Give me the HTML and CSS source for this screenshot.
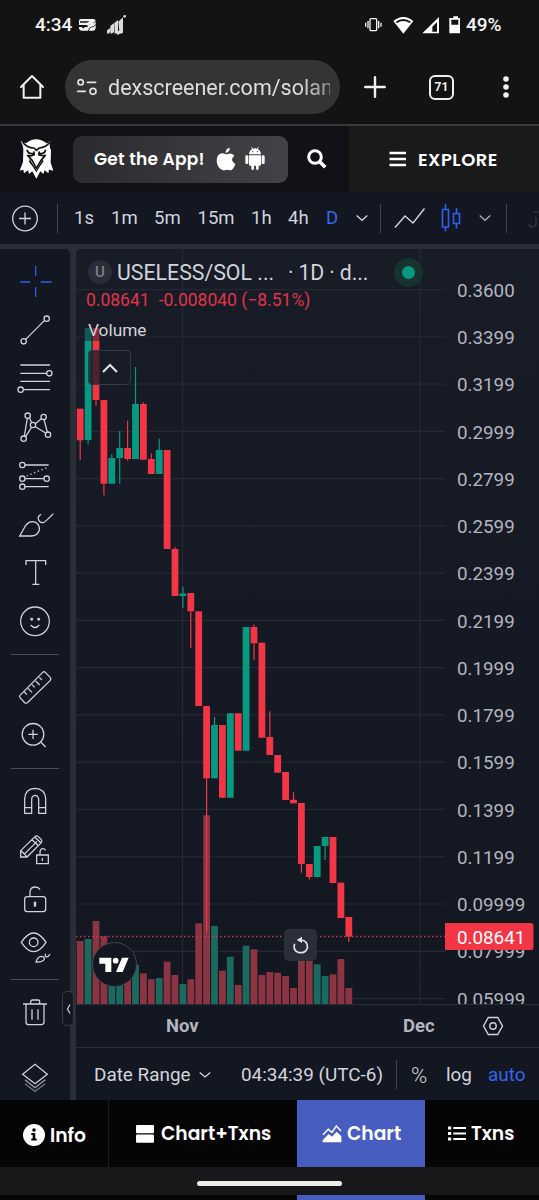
FILE: index.html
```
<!DOCTYPE html>
<html lang="en">
	<head>
		<meta charset="UTF-8">
		<meta name="viewport" content="width=device-width, initial-scale=1">
		<title>USELESS/SOL</title>
		<link rel="stylesheet" href="styles.css">
	</head>
	<body>

		<div class="status-bar">
			<span class="clock">4:34</span>
			<svg class="status-left" width="50" height="24" viewBox="0 0 150 72">
				<path fill="#f2f2f2" fill-rule="evenodd" d="M8 18h38q6 0 7 6l-12 9-7 1-6 8H3V24q0-6 5-6zM6 25v4h19q6 0 9-4zM3 36h22l4 2q8-6 12-6 6-1 12-6v18q-1 9-8 9H12q-9 0-9-9z"/>
				<circle cx="16" cy="42" r="4" fill="#131313"/>
				<path fill="none" stroke="#131313" stroke-width="2.5" d="M31 54q2-12 10-12 8 0 12-8"/>
				<g fill="#ddd"><path d="M87 52l10-7v13l-9 6zM97 39l11-9v28l-10 5zM109 30l11-9v34l-10 9zM114 60l13-11v12l-8 5zM121 26l14-13v46l-10 4z"/><circle cx="140" cy="10" r="4"/></g>
			</svg>
			<svg class="status-right" width="100" height="24" viewBox="0 0 300 72">
				<g fill="none" stroke="#f2f2f2" stroke-width="4"><rect x="21" y="17" width="20" height="36" rx="3"/><path d="M15 24v22M8 29v12M47 24v22M54 29v12"/></g>
				<path fill="#fff" d="M91 24q30-24 60 0l-30 38zM98 26l4 4q19-12 38 0l4-4q-23-16-46 0z" fill-rule="evenodd"/>
				<path fill="#fff" d="M178 61l50-49v49zM208 56h14V27l-14 14z" fill-rule="evenodd"/>
				<path fill="#fff" d="M265 15h6v-5h14v5h6v46h-32V15zM265 20v15h21V20z" fill-rule="evenodd"/>
			</svg>
			<span class="battery">49%</span>
		</div>

		<div class="browser-bar">
			<svg class="home" width="26" height="28" viewBox="0 0 78 84" fill="none" stroke="#f0f0f0" stroke-width="6" stroke-linejoin="round" stroke-linecap="round"><path d="M6 42L39 9l33 33M14 36v38h50V36"/></svg>
			<div class="url">
				<svg width="22" height="22" viewBox="0 0 66 66" fill="none" stroke="#e3e3e3" stroke-width="5" stroke-linecap="round"><circle cx="14" cy="19" r="8"/><path d="M34 19h25M5 46h23"/><circle cx="51" cy="46" r="9"/></svg>
				<span>dexscreener.com/solan</span>
			</div>
			<svg class="plus" width="22" height="22" viewBox="0 0 22 22" stroke="#f0f0f0" stroke-width="2.4" stroke-linecap="round"><path d="M11 1.2v19.6M1.2 11h19.6"/></svg>
			<div class="tab-count">71</div>
			<svg class="dots" width="8" height="24" viewBox="0 0 8 24" fill="#f0f0f0"><circle cx="4" cy="4" r="2.800"/><circle cx="4" cy="12" r="2.800"/><circle cx="4" cy="20" r="2.800"/></svg>
		</div>

		<header class="site-header">
			<svg class="owl" width="36" height="42" viewBox="0 0 108 126" fill="#fff">
				<path d="M24 16Q54-8 86 16L97 10Q92 24 99 36L98 74L106 98L93 95L91 106L80 97L76 108L67 100L55 122L43 100L33 108L30 97L18 106L16 95L5 98L15 72L16 36Q17 24 8 10z"/>
				<path fill="none" stroke="#111116" stroke-width="5" stroke-linejoin="round" d="M14 12Q26 30 48 30L55 37L64 30Q84 28 96 12M27 35Q31 50 46 46M83 35Q79 50 64 46M47 40L49 50Q33 56 29 52L43 68L55 91L69 67L82 52Q75 55 62 50L64 40"/>
				<path fill="#111116" d="M35 63l20 33 20-33 1 8q-9 11-21 32-12-21-22-32z"/>
			</svg>
			<div class="get-app">
				<span>Get the App!</span>
				<svg width="20" height="24" viewBox="0 0 60 72" fill="#fff"><path d="M41 2q2 12-12 16Q28 6 41 2zM29 22q5 0 9-2 9-3 17 6-15 11 3 26-7 18-15 18-5-1-11-2-8 3-10 2Q5 66 2 43 2 21 18 19q5 0 11 3z"/></svg>
				<svg width="20" height="24" viewBox="0 0 60 72" fill="#fff"><path d="M12 22Q13 10 22 6L18 1l2-1 4 5q7-2 12 0l4-5 2 1-4 5q9 4 10 16zM12 25h36v28q0 3-4 3h-3v11q-4 4-8 0V56h-6v11q-4 4-8 0V56h-3q-4 0-4-3z"/><rect x="1" y="25" width="9" height="26" rx="4"/><rect x="50" y="25" width="9" height="26" rx="4"/><circle cx="23" cy="14" r="2" fill="#444"/><circle cx="37" cy="14" r="2" fill="#444"/></svg>
			</div>
			<svg class="search" width="20" height="20" viewBox="0 0 20 20" fill="none" stroke="#fff" stroke-width="3"><circle cx="8" cy="8" r="6.3"/><path d="M12.5 12.5l5.7 5.7" stroke-width="3.6"/></svg>
			<div class="explore">
				<svg width="18" height="16" viewBox="0 0 18 16" stroke="#fff" stroke-width="2.6"><path d="M.5 2h16.5M.5 8h16.5M.5 14h16.5"/></svg>
				<span>EXPLORE</span>
			</div>
		</header>

		<div class="chart-toolbar">
			<svg width="27" height="27" viewBox="0 0 27 27" fill="none" stroke="#d1d4dc" stroke-width="1.3"><circle cx="13" cy="13.5" r="12.3"/><path d="M13 7.5v12M7 13.5h12"/></svg>
			<i class="sep"></i>
			<span>1s</span>
			<span>1m</span>
			<span>5m</span>
			<span>15m</span>
			<span>1h</span>
			<span>4h</span>
			<span class="active">D</span>
			<svg width="12" height="8" viewBox="0 0 12 8" fill="none" stroke="#d1d4dc" stroke-width="1.3"><path d="M.7 1.500L6 6.300l5.300-4.800"/></svg>
			<i class="sep"></i>
			<svg width="32" height="22" viewBox="0 0 32 22" fill="none" stroke="#d1d4dc" stroke-width="1.4"><path d="M1 20.500L11 9l8 7L30.500 1.500"/></svg>
			<svg width="22" height="28" viewBox="0 0 22 28" fill="none" stroke="#2f61ee" stroke-width="1.6"><path d="M2.500 5.500h6v17.500h-6zM5.500 0v5.500M5.500 23v4.500M13.500 9.500h6v10h-6zM16.500 4v5.500M16.500 19.500v5"/></svg>
			<svg width="12" height="8" viewBox="0 0 12 8" fill="none" stroke="#a9acb5" stroke-width="1.300"><path d="M.7 1.500L6 6.300l5.300-4.800"/></svg>
			<i class="sep"></i>
			<svg width="11" height="22" viewBox="0 0 11 22" fill="none" stroke="#2e323d" stroke-width="1.600"><path d="M5 5h6M8 10v6q0 4-4 4-2 0-3-3"/></svg>
		</div>

		<main class="workspace">
			<nav class="tools">
				<svg class="tool selected" viewBox="33 55 144 144"><path d="M107 79v30M107 142v30M61 127h30M122 127h33"/></svg>
				<svg class="tool" viewBox="33 200 144 144"><path d="M77 297l56-56"/><circle cx="71" cy="303" r="8"/><circle cx="140" cy="235" r="8"/></svg>
				<svg class="tool" viewBox="33 346 144 144"><path d="M61 376h89M61 401h79M61 425h89M71 450h79"/><circle cx="148" cy="401" r="8"/><circle cx="62" cy="450" r="8"/></svg>
				<svg class="tool" viewBox="33 491 144 144"><path d="M82 534l-9 53M88 532l7 15M77 589l17-27M106 550l18-15M106 559l31 19M132 538l10 37"/><circle cx="83" cy="526" r="8"/><circle cx="131" cy="530" r="8"/><circle cx="99" cy="554" r="8"/><circle cx="71" cy="595" r="8"/><circle cx="144" cy="583" r="8"/></svg>
				<svg class="tool" viewBox="33 637 144 144"><path d="M75 676h71M75 717h57M75 741h71"/><path stroke-dasharray="4 8" d="M80 709l60-25"/><circle cx="67" cy="676" r="8"/><circle cx="67" cy="717" r="8"/><circle cx="140" cy="717" r="8"/><circle cx="67" cy="741" r="8"/></svg>
				<svg class="tool" viewBox="33 2 144 144"><path d="M59 107L78 74Q91 60 107 66Q120 76 118 89Q113 107 93 107zM123 42q-12 8-7 17 4 9 14 8 5-1 30-27"/></svg>
				<svg class="tool" viewBox="33 148 144 144"><path d="M78 196v-13h59v13M107 183v71M97 254h21"/></svg>
				<svg class="tool" viewBox="33 293 144 144"><circle cx="105" cy="363" r="43"/><path d="M92 374q13 15 26 0"/><circle cx="95" cy="357" r="2.500"/><circle cx="116" cy="357" r="2.500"/></svg>
				<i class="line"></i>
				<svg class="tool" viewBox="33 488 144 144"><path d="M60 585l68-69q4-4 8 0l15 16q3 4 0 8l-69 67q-4 3-8 0l-14-15q-3-4 0-7zM73 575l8 8M84 564l12 12M96 553l8 8M107 542l12 12M118 531l8 8"/></svg>
				<svg class="tool" viewBox="33 634 144 144"><circle cx="99" cy="701" r="32.500"/><path d="M99 687v28M85 701h28M122 724l15 15"/></svg>
				<i class="line"></i>
				<svg class="tool" viewBox="33 22 144 144"><path d="M74 131V87Q76 57 105 56q30 1 32 31v44h-21V90q-1-13-11-13-10 1-10 13v41zM74 114h21M116 114h21"/></svg>
				<svg class="tool" viewBox="33 167 144 144"><path d="M62 260v-19l43-42q5-5 10 0l9 9q4 5 0 9l-43 43zM104 200l20 19M96 208l20 19M72 252l39-39M64 242l17 17M110 254h35v26h-35zM120 254v-10q1-9 9-9 5 0 8 5M127 263v9"/></svg>
				<svg class="tool" viewBox="33 313 144 144"><rect x="74" y="381" width="63" height="45" rx="8"/><path d="M90 381v-15q2-14 16-14 9 0 14 8"/><path stroke-width="7" d="M105 396v15"/></svg>
				<svg class="tool" viewBox="33 458 144 144"><path d="M64 516q37-56 74 0-37 56-74 0zM108 575q5-17 17-17 9 1 8 9-4 9-25 8zM137 550q-4 10 3 10 6-1 10-9"/><circle cx="101" cy="516" r="13"/></svg>
				<i class="line"></i>
				<svg class="tool" viewBox="33 -31 144 144"><path d="M69 17h72M78 17v55q1 7 8 7h38q8-1 8-7V17M92 17V9q1-4 5-4h17q5 0 5 4v8M96 33v31M114 33v31"/></svg>
				<svg class="tool layers" viewBox="33 159 144 144"><path d="M68 223l37-30 37 30-37 28z"/><path opacity=".75" d="M75 239l30 24 31-24"/><path opacity=".5" d="M75 251l30 23 31-23"/></svg>
			</nav>

			<section class="pane">
				<div class="plot">
					<svg id="chart" width="463" height="755" viewBox="76 249 463 755"></svg>
					<div class="legend">
						<div class="symbol">
							<b class="badge">U</b>
							<span class="pair">USELESS/SOL ...</span>
							<span class="interval">· 1D · d...</span>
							<i class="live"></i>
						</div>
						<div class="change"><span>0.08641</span><span>-0.008040 (−8.51%)</span></div>
						<div class="volume">Volume</div>
						<div class="collapse"><svg width="16" height="10" viewBox="0 0 16 10" fill="none" stroke="#e4e6ec" stroke-width="2"><path d="M1 9l7-7 7 7"/></svg></div>
					</div>
					<div class="tv-logo">
						<svg width="30" height="16" viewBox="0 0 90 48" fill="#fff"><path d="M1 2h36v43H19V20H1zM69 2h20L71 45H51z"/><circle cx="50" cy="11" r="8.500"/></svg>
					</div>
					<div class="reset">
						<svg width="18" height="20" viewBox="0 0 54 60" fill="none" stroke="#e0e3eb" stroke-width="5"><path d="M8 26Q2 46 19 52q21 5 27-13 2-20-17-24"/><path fill="#e0e3eb" stroke="none" d="M30 5v19L14 15z"/></svg>
					</div>
				</div>
				<div class="time-axis">
					<span class="nov">Nov</span>
					<span class="dec">Dec</span>
					<svg width="22" height="20" viewBox="0 0 22 20" fill="none" stroke="#d1d4dc" stroke-width="1.400"><path d="M1.500 10l4.800-8.500h9.400l4.800 8.500-4.800 8.500H6.300z"/><circle cx="11" cy="10" r="3.200"/></svg>
				</div>
				<div class="range-bar">
					<span>Date Range</span>
					<svg width="12" height="8" viewBox="0 0 12 8" fill="none" stroke="#d1d4dc" stroke-width="1.300"><path d="M.7 1.500L6 6l5.300-4.500"/></svg>
					<span>04:34:39 (UTC-6)</span>
					<i class="sep"></i>
					<span class="percent">%</span>
					<span>log</span>
					<span class="active">auto</span>
				</div>
			</section>
			<div class="handle"><svg width="5" height="10" viewBox="0 0 5 10" fill="none" stroke="#d1d4dc" stroke-width="1.200"><path d="M4 .5L1.500 5 4 9.500"/></svg></div>
		</main>

		<footer class="tabs">
			<div class="tab info">
				<svg width="22" height="22" viewBox="0 0 22 22"><circle cx="11" cy="11" r="11" fill="#fff"/><circle cx="11" cy="6" r="1.800" fill="#050505"/><path fill="#050505" d="M8.300 9h4v5.500h1.400v2H8.300v-2h1.400V11H8.300z"/></svg>
				<span>Info</span>
			</div>
			<div class="tab both">
				<svg width="18" height="18" viewBox="0 0 18 18" fill="#fff"><rect width="18" height="8.200" rx="1"/><rect y="9.600" width="18" height="8.200" rx="1"/></svg>
				<span>Chart+Txns</span>
			</div>
			<div class="tab chart current">
				<svg width="20" height="18" viewBox="0 0 60 54"><path fill="#fff" d="M2 52V46L20 27l10 8 14-15 14 14v18z"/><path fill="none" stroke="#485dc0" stroke-width="7" d="M3 33l16-16 11 9L43 7l14 15"/><path fill="none" stroke="#fff" stroke-width="4.500" d="M3 29l16-16 11 9L43 3l14 15"/></svg>
				<span>Chart</span>
			</div>
			<div class="tab txns">
				<svg width="18" height="15" viewBox="0 0 18 15" stroke="#fff" stroke-width="2.200"><path d="M5.300 2H18M5.300 7.500H18M5.300 13H18"/><path stroke-width="3.200" d="M0 2h3.200M0 7.500h3.200M0 13h3.200"/></svg>
				<span>Txns</span>
			</div>
		</footer>
		<div class="gesture"><i></i></div>
		<div class="edge"><i></i><i></i><i class="current"></i><i></i></div>

		<script src="chart.js"></script>
	</body>
</html>
```
FILE: styles.css
```
*{
	margin: 0;
	padding: 0;
	box-sizing: border-box;
}
body{
	width: 539px;
	height: 1200px;
	overflow: hidden;
	background: #131313;
	color: #d1d4dc;
	font-family: Roboto, sans-serif;
}
svg{
	display: block;
	flex: none;
}
span{
	white-space: nowrap;
}

/* phone and browser chrome */
.status-bar{
	display: flex;
	align-items: center;
	height: 50px;
	padding: 0 0 1px 35px;
	color: #f4f4f4;
	font-size: 19px;
	font-weight: 500;
}
.clock{
	width: 43px;
}
.status-right{
	margin-left: 235px;
	margin-right: 3px;
}
.browser-bar{
	display: flex;
	align-items: center;
	height: 74px;
	padding-left: 19px;
}
.url{
	display: flex;
	align-items: center;
	width: 275px;
	height: 54px;
	margin-left: 20px;
	padding: 0 10px 0 11px;
	border-radius: 27px;
	background: #343434;
	color: #dedede;
	font-size: 21.500px;
}
.url span{
	flex: 1;
	margin-left: 10px;
	overflow: hidden;
	-webkit-mask-image: linear-gradient(90deg, #000 190px, rgba(0, 0, 0, .5) 221px);
}
.plus{
	margin-left: 24px;
}
.tab-count{
	width: 25px;
	height: 25px;
	margin-left: 43px;
	border: 2.500px solid #f0f0f0;
	border-radius: 6px;
	color: #f0f0f0;
	font-size: 12px;
	font-weight: 700;
	line-height: 20px;
	text-align: center;
}
.dots{
	margin-left: 48px;
}

/* site header */
.site-header{
	display: flex;
	align-items: center;
	height: 68px;
	border-top: 2px solid #38383a;
	background: #111116;
	color: #fff;
	font-family: Poppins, Inter, sans-serif;
	font-weight: 600;
}
.owl{
	margin-left: 18px;
}
.get-app{
	display: flex;
	align-items: center;
	width: 215px;
	height: 47px;
	margin-left: 19px;
	padding-left: 21px;
	border-radius: 9px;
	background: linear-gradient(90deg, #2b2b2f, #434347);
	font-size: 17px;
}
.get-app span{
	width: 122px;
	letter-spacing: .25px;
}
.get-app svg + svg{
	margin-left: 9px;
}
.search{
	margin-left: 19px;
}
.explore{
	display: flex;
	align-items: center;
	width: 190px;
	height: 66px;
	margin-left: 22px;
	padding-left: 40px;
	background: #1a1a1a;
	font-size: 18px;
	letter-spacing: .5px;
}
.explore span{
	margin-left: 11px;
}

/* interval toolbar */
.chart-toolbar{
	display: grid;
	grid-template-columns: 45px 17px 37px 43px 43.500px 53.500px 37px 38px 29.500px 24.500px 14px 46px 39px 26.500px 22px 11px;
	align-items: center;
	height: 57px;
	padding-left: 12px;
	border-bottom: 5px solid #2a2e39;
	background: #131722;
	font-size: 18.500px;
	overflow: hidden;
}
.sep{
	width: 1px;
	height: 29px;
	background: #434651;
}
.active{
	color: #3467ee;
}

/* drawing tools */
.workspace{
	position: relative;
	display: flex;
	gap: 6px;
	height: 851px;
	background: #2a2e39;
}
.tools{
	display: flex;
	flex-direction: column;
	align-items: center;
	width: 70px;
	padding-top: 9px;
	border-radius: 0 5px 0 0;
	background: #131722;
}
.tool{
	width: 48px;
	height: 48px;
	margin-bottom: .5px;
	fill: none;
	stroke: #d1d4dc;
	stroke-width: 3.800;
}
.selected{
	stroke: #2f61ee;
}
.line{
	width: 48px;
	height: 1px;
	margin: 8px 0;
	flex: none;
	background: #4a4e59;
}
.layers{
	margin-top: 16px;
}

/* chart pane */
.pane{
	width: 463px;
	border-radius: 5px 0 0 0;
	overflow: hidden;
	background: #131722;
}
.plot{
	position: relative;
	height: 755px;
	background: linear-gradient(#181c27, #131722);
}
.candle-up{ fill: #089981; }
.candle-down{ fill: #f23645; }
.vol-up{ fill: #1c695f; }
.vol-down{ fill: #8b3442; }
.grid{
	stroke: #262a34;
	stroke-width: 1.200;
}
.last-line{
	stroke: #c43a4b;
	stroke-width: 1.300;
	stroke-dasharray: 1.500 2.500;
}
.price{
	fill: #b2b5be;
	font-size: 18.800px;
}
.last-price{
	fill: #fff;
	font-size: 18.800px;
}
.legend{
	position: absolute;
	left: 6px;
	top: 7px;
	width: 345px;
}
.symbol{
	display: flex;
	align-items: center;
	height: 32px;
	padding-left: 6px;
	font-size: 21.300px;
}
.badge{
	width: 24px;
	height: 24px;
	border-radius: 50%;
	background: #2a2e39;
	color: #7d808a;
	font-size: 15px;
	font-weight: 500;
	line-height: 24px;
	text-align: center;
}
.pair{
	width: 171px;
	margin-left: 5px;
}
.interval{
	letter-spacing: -.15px;
}
.live{
	width: 29px;
	height: 29px;
	margin-left: auto;
	margin-right: 4px;
	border: 8px solid #16332f;
	border-radius: 50%;
	background: #089981;
}
.change{
	display: flex;
	gap: 9px;
	height: 25px;
	padding-left: 4px;
	color: #e03548;
	font-size: 17.500px;
	line-height: 25px;
}
.volume{
	width: 69px;
	height: 28px;
	padding-left: 6px;
	background: rgba(24, 28, 39, .5);
	font-size: 17.300px;
	line-height: 34px;
}
.collapse{
	display: flex;
	align-items: center;
	justify-content: center;
	width: 43px;
	height: 35px;
	margin: 9px 0 0 6px;
	border: 1.500px solid #363a45;
	border-radius: 4px;
	background: rgba(24, 28, 39, .75);
}
.tv-logo{
	position: absolute;
	left: 16px;
	top: 693px;
	display: flex;
	align-items: center;
	justify-content: center;
	width: 45px;
	height: 45px;
	border: 1.500px solid #434651;
	border-radius: 50%;
	background: #131722;
}
.tv-logo svg{
	margin-right: 1px;
}
.reset{
	position: absolute;
	left: 208px;
	top: 680px;
	display: flex;
	align-items: center;
	justify-content: center;
	width: 33px;
	height: 32px;
	border-radius: 5px;
	background: #2a2e39;
}
.time-axis{
	display: flex;
	align-items: center;
	height: 44px;
	padding-bottom: 1px;
	border-top: 1px solid #2a2e39;
	border-bottom: 1px solid #2a2e39;
	color: #b2b5be;
	font-size: 18.500px;
	font-weight: 700;
}
.nov{
	width: 237px;
	padding-left: 90px;
}
.dec{
	width: 169px;
	padding-left: 90px;
}
.range-bar{
	display: grid;
	grid-template-columns: 105px 42px 155px 15px 35px 42px 38px;
	align-items: center;
	height: 53px;
	padding-left: 18px;
	font-size: 18.900px;
}
.percent{
	padding-top: 2px;
	font-size: 22px;
	font-weight: 300;
}
.handle{
	position: absolute;
	left: 62px;
	top: 742px;
	display: flex;
	align-items: center;
	justify-content: center;
	width: 12px;
	height: 35px;
	border: 1px solid #363a45;
	border-radius: 5px;
	background: #131722;
}

/* bottom tabs */
.tabs{
	display: grid;
	grid-template-columns: 109px 188px 128px 114px;
	height: 67px;
	background: #050505;
	color: #fff;
	font-family: Poppins, Inter, sans-serif;
	font-size: 18.700px;
	font-weight: 600;
}
.tab{
	display: flex;
	align-items: center;
	gap: 7px;
}
.info{
	padding: 3px 0 0 23px;
	gap: 5px;
	border-right: 1px solid #1d1d1f;
}
.both{
	padding-left: 27px;
}
.chart{
	padding-left: 25px;
	gap: 5px;
}
.txns{
	padding-left: 23px;
	gap: 5px;
}
.current{
	background: #485dc0;
}
.gesture{
	display: flex;
	align-items: center;
	justify-content: center;
	height: 28px;
	padding-top: 5px;
	background: #18181b;
}
.gesture i{
	width: 145px;
	height: 5px;
	border-radius: 3px;
	background: #ecebe8;
}
.edge{
	display: grid;
	grid-template-columns: 109px 188px 128px 114px;
	height: 5px;
	background: #050505;
}
```
FILE: chart.js
```
// dir, body top, body bottom, wick top, wick bottom, volume top
const candles = [
	['down', 408.7, 440.3, 408.7, 460, 941],
	['up', 328, 440, 328, 444.3, 939],
	['down', 328, 400, 328, 406, 921],
	['down', 400, 483.7, 400, 495.3, 936.3],
	['up', 458, 483.7, 454.3, 483.7, 968],
	['up', 448, 458, 431, 483.7, 965],
	['down', 448, 459, 420.7, 460.7, 968],
	['up', 404, 459, 367, 459, 964.7],
	['down', 404, 459.7, 402.3, 459.7, 973.3],
	['down', 459, 474, 453.3, 474, 979.3],
	['up', 450, 474, 438.7, 474, 978],
	['down', 450, 549, 450, 549, 961.7],
	['down', 549, 596, 547, 596, 975],
	['up', 593.5, 596, 586.7, 608, 984],
	['down', 593, 611.3, 593, 648, 979.3],
	['down', 611.3, 706, 611.3, 706, 923.3],
	['down', 706, 778.3, 706, 932.3, 815.3],
	['up', 725, 778.3, 717, 778.3, 926],
	['down', 725, 797.7, 725, 797.7, 970.7],
	['up', 713.3, 797.7, 713.3, 797.7, 956.7],
	['down', 713.3, 750.7, 713.3, 750.7, 985],
	['up', 627, 750.7, 627, 750.7, 945.7],
	['down', 627, 643.3, 624.7, 660, 949.3],
	['down', 642.7, 737.7, 642.7, 737.7, 975],
	['down', 737, 755, 711.3, 755, 972],
	['down', 755, 772.7, 755, 772.7, 972.7],
	['down', 772, 800, 772, 800, 976],
	['down', 799.7, 803.3, 792, 803.3, 988],
	['down', 803, 864, 803, 872.7, 955],
	['down', 864, 877, 864, 879.7, 955],
	['up', 846, 877, 846, 877, 964.3],
	['up', 837, 846, 837, 860, 976],
	['down', 837, 883, 837, 883, 974.3],
	['down', 882.7, 918, 882.7, 918, 959],
	['down', 917, 936.7, 917, 942, 988],
];

const prices = ['0.3600', '0.3399', '0.3199', '0.2999', '0.2799', '0.2599', '0.2399', '0.2199',
	'0.1999', '0.1799', '0.1599', '0.1399', '0.1199', '0.09999', '0.07999', '0.05999'];

let grid = '';
let labels = '';
prices.forEach((price, i) => {
	const y = 289.5 + i * 47.27;
	grid += `<path class="grid" d="M76 ${y}H445"/>`;
	labels += `<text class="price" x="457" y="${y + 7.2}">${price}</text>`;
});
grid += '<path class="grid" d="M182.500 249V1004M419.800 249V1004"/>';

let volumes = '';
let bars = '';
candles.forEach(([dir, top, bottom, high, low, vol], i) => {
	const x = 80.2 + i * 7.9;
	volumes += `<rect class="vol-${dir}" x="${x - 3.4}" y="${vol}" width="6.8" height="${1004 - vol}"/>`;
	bars += `<rect class="candle-${dir}" x="${x - 0.6}" y="${high}" width="1.2" height="${low - high}"/>`;
	bars += `<rect class="candle-${dir}" x="${x - 3.4}" y="${top}" width="6.8" height="${bottom - top}"/>`;
});

document.getElementById('chart').innerHTML = grid + volumes + bars + labels +
	'<path class="last-line" d="M76 936.500H445"/>' +
	'<path class="candle-down" d="M445 923h86q2.500 0 2.500 2.500v22q0 2.500-2.500 2.500h-86z"/>' +
	'<text class="last-price" x="457" y="943.500">0.08641</text>';
```
